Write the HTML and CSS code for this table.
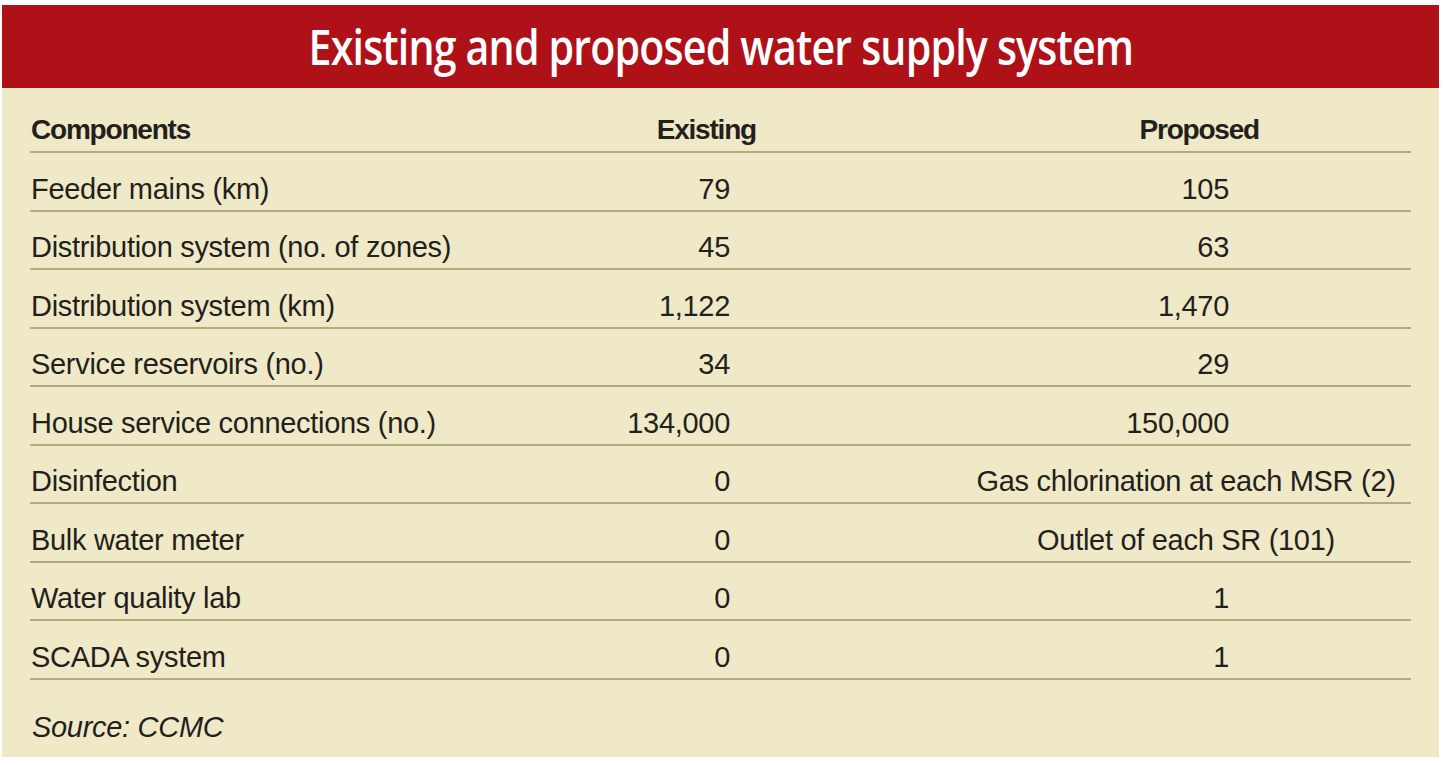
FILE: index.html
```html
<!DOCTYPE html>
<html lang="en">
<head>
<meta charset="utf-8">
<title>Existing and proposed water supply system</title>
<link rel="stylesheet" href="styles.css">
</head>
<body>
<div class="card">
  <h1 class="title"><span class="title-text">Existing and proposed water supply system</span></h1>
  <div class="table">
    <div class="row head">
      <div class="c-label">Components</div>
      <div class="c-ex">Existing</div>
      <div class="c-pr">Proposed</div>
    </div>
    <div class="row">
      <div class="c-label">Feeder mains (km)</div>
      <div class="c-ex">79</div>
      <div class="c-pr">105</div>
    </div>
    <div class="row">
      <div class="c-label">Distribution system (no. of zones)</div>
      <div class="c-ex">45</div>
      <div class="c-pr">63</div>
    </div>
    <div class="row">
      <div class="c-label">Distribution system (km)</div>
      <div class="c-ex">1,122</div>
      <div class="c-pr">1,470</div>
    </div>
    <div class="row">
      <div class="c-label">Service reservoirs (no.)</div>
      <div class="c-ex">34</div>
      <div class="c-pr">29</div>
    </div>
    <div class="row">
      <div class="c-label">House service connections (no.)</div>
      <div class="c-ex">134,000</div>
      <div class="c-pr">150,000</div>
    </div>
    <div class="row">
      <div class="c-label">Disinfection</div>
      <div class="c-ex">0</div>
      <div class="c-pr txt">Gas chlorination at each MSR (2)</div>
    </div>
    <div class="row">
      <div class="c-label">Bulk water meter</div>
      <div class="c-ex">0</div>
      <div class="c-pr txt">Outlet of each SR (101)</div>
    </div>
    <div class="row">
      <div class="c-label">Water quality lab</div>
      <div class="c-ex">0</div>
      <div class="c-pr">1</div>
    </div>
    <div class="row">
      <div class="c-label">SCADA system</div>
      <div class="c-ex">0</div>
      <div class="c-pr">1</div>
    </div>
  </div>
  <p class="source">Source: CCMC</p>
</div>
</body>
</html>
```

FILE: styles.css
```css
html, body {
  margin: 0;
  padding: 0;
  background: #ffffff;
}

body {
  font-family: "Liberation Sans", Arial, sans-serif;
  color: #231f1c;
}

.card {
  width: 1437px;
  height: 752px;
  margin: 5px 0 0 2px;
  background: #efe9c7;
  box-sizing: border-box;
}

.title {
  margin: 0;
  height: 83px;
  background: #ae1117;
  color: #ffffff;
  font-family: "Open Sans", sans-serif;
  font-weight: 600;
  font-size: 49px;
  letter-spacing: -1px;
  line-height: 83px;
  text-align: center;
}

.title-text {
  display: inline-block;
  transform: scaleX(0.84);
  transform-origin: center;
}

.table {
  padding: 0 28px;
}

.row {
  display: grid;
  grid-template-columns: 570px 160px 651px;
  align-items: end;
  box-sizing: content-box;
  height: 50.5px;
  padding-bottom: 6px;
  border-bottom: 2px solid #b1ad7b;
  font-size: 29px;
  line-height: 29px;
  letter-spacing: -0.3px;
}

.row.head {
  height: 56px;
  padding-bottom: 7px;
  font-size: 28px;
  line-height: 28px;
  font-weight: bold;
  letter-spacing: -1.2px;
}

.c-label {
  padding-left: 1px;
  white-space: nowrap;
}

.c-ex {
  text-align: right;
  padding-right: 30px;
}

.head .c-ex {
  padding-right: 4px;
}

.c-pr {
  text-align: right;
  padding-right: 182px;
  white-space: nowrap;
}

.head .c-pr {
  padding-right: 152px;
}

.c-pr.txt {
  text-align: center;
  padding-right: 0;
  padding-left: 201px;
}

.source {
  margin: 0;
  padding: 33px 0 0 30px;
  font-size: 29px;
  line-height: 29px;
  letter-spacing: -0.3px;
  font-style: italic;
}
```
